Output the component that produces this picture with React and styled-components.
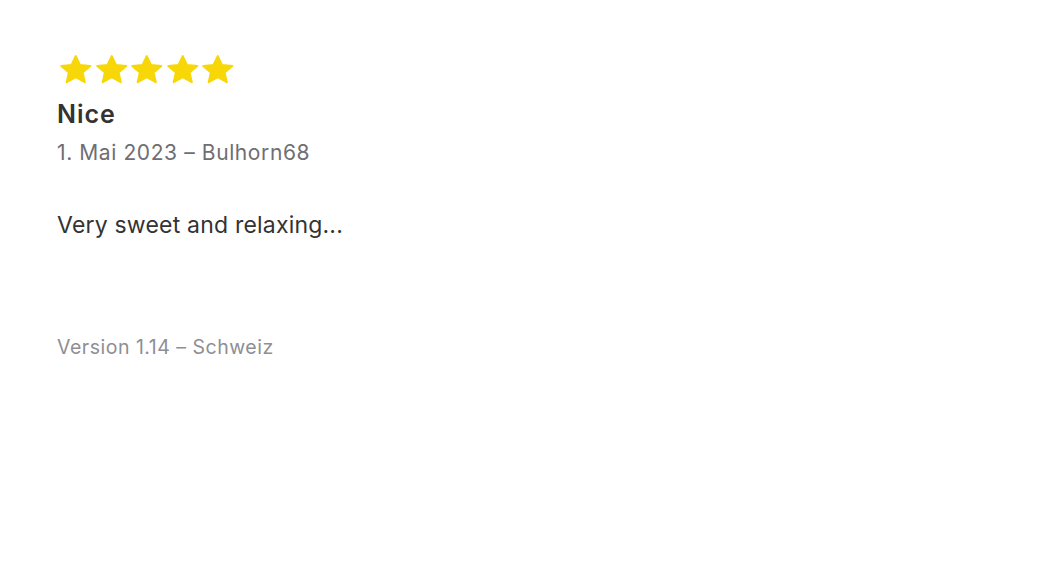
import React from "react";
import styled, { createGlobalStyle } from "styled-components";

const GlobalStyle = createGlobalStyle`
  html, body {
    margin: 0;
    padding: 0;
    background: #ffffff;
  }
  body {
    font-family: Inter, "Liberation Sans", sans-serif;
    -webkit-font-smoothing: antialiased;
  }
`;

const Review = styled.article`
  width: 1042px;
  height: 570px;
  box-sizing: border-box;
  padding: 53px 0 0 57px;
  display: flex;
  flex-direction: column;
  align-items: flex-start;
`;

const Stars = styled.div`
  display: flex;
  margin-left: 1px;
  svg {
    display: block;
  }
`;

const Title = styled.h2`
  margin: 12px 0 0;
  font-size: 25px;
  font-weight: 600;
  color: #333333;
  letter-spacing: 1px;
  line-height: 30px;
`;

const Meta = styled.div`
  margin-top: 11px;
  font-size: 21px;
  color: #6e6e73;
  letter-spacing: 0.6px;
  line-height: 26px;
`;

const Body = styled.p`
  margin: 45px 0 0;
  font-size: 23px;
  color: #333333;
  letter-spacing: 0.2px;
  line-height: 28px;
`;

const Footer = styled.div`
  margin-top: 96px;
  font-size: 19.5px;
  color: #8e8e93;
  letter-spacing: 0.5px;
  line-height: 24px;
`;

const Star = () => (
  <svg width="35.5" height="34" viewBox="0 0 24 24" preserveAspectRatio="none">
    <path
      d="M12 2.2l2.9 6.3 6.9.7-5.2 4.6 1.5 6.8L12 17.1l-6.1 3.5 1.5-6.8-5.2-4.6 6.9-.7z"
      fill="#f7d708"
      stroke="#f7d708"
      strokeWidth="1.4"
      strokeLinejoin="round"
    />
  </svg>
);

export default function App() {
  return (
    <>
      <GlobalStyle />
      <Review>
        <Stars>
          {[0, 1, 2, 3, 4].map((i) => (
            <Star key={i} />
          ))}
        </Stars>
        <Title>Nice</Title>
        <Meta>1. Mai 2023 – Bulhorn68</Meta>
        <Body>Very sweet and relaxing...</Body>
        <Footer>Version 1.14 – Schweiz</Footer>
      </Review>
    </>
  );
}
